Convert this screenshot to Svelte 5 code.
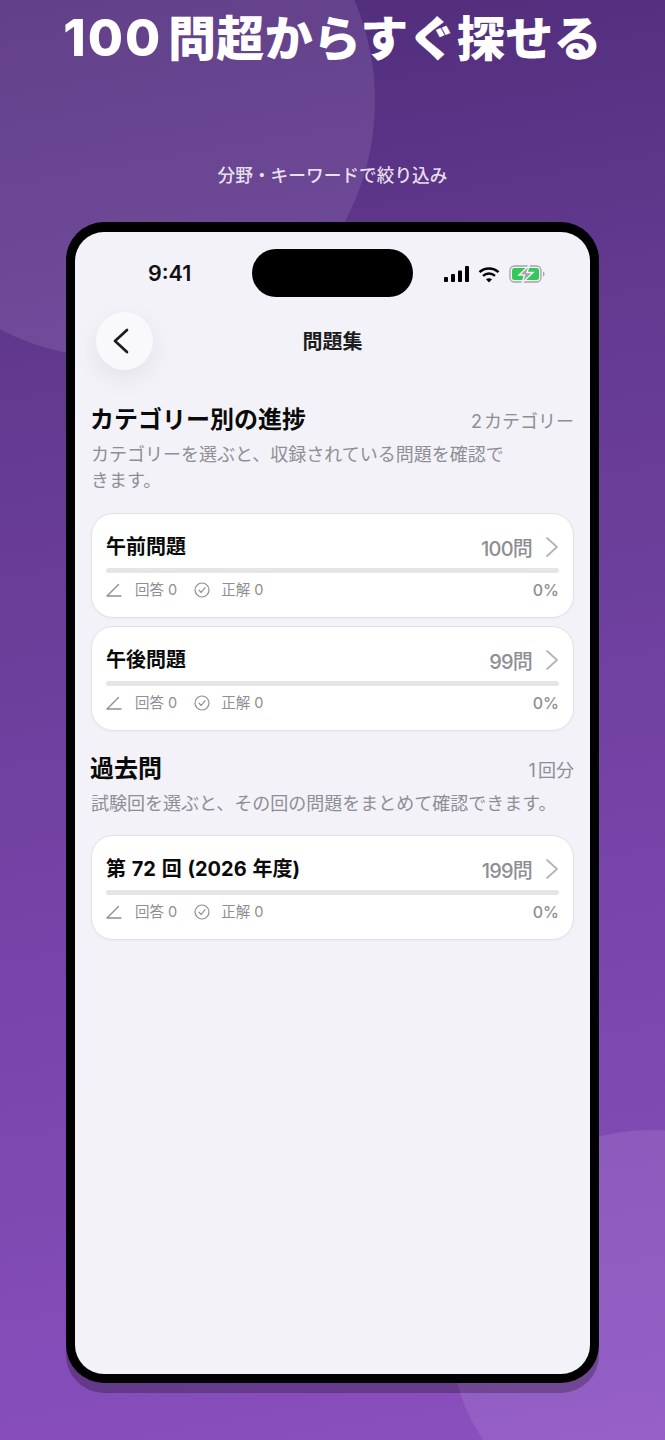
<script>
  const sections = [
    { title: 'カテゴリー別の進捗', count: '2 カテゴリー', desc: 'カテゴリーを選ぶと、収録されている問題を確認で\nきます。', cls: 'two',
      rows: [{ name: '午前問題', n: '100問' }, { name: '午後問題', n: '99問' }] },
    { title: '過去問', count: '1 回分', desc: '試験回を選ぶと、その回の問題をまとめて確認できます。', cls: 'one',
      rows: [{ name: '第 72 回 (2026 年度)', n: '199問' }] }
  ];
</script>

<div class="page">
  <div class="blob tl"></div>
  <div class="blob br"></div>
  <h1><span class="digits">100</span> 問超からすぐ探せる</h1>
  <p class="sub">分野・キーワードで絞り込み</p>
  <div class="phone">
    <div class="screen">
      <div class="status">
        <span class="time">9:41</span>
        <div class="island"></div>
        <div class="icons">
          <svg width="25" height="17" viewBox="0 0 25 17"><rect x="0" y="11" width="4" height="5" rx="1"/><rect x="7" y="8" width="4" height="8" rx="1"/><rect x="14" y="4.5" width="4" height="11.5" rx="1"/><rect x="21" y="0" width="4" height="16" rx="1"/></svg>
          <svg width="22" height="17" viewBox="0 0 22 17" fill="none" stroke="#000" stroke-width="2.4"><path d="M1.5 6.2C6.7 1.2 15.3 1.2 20.5 6.2"/><path d="M5 9.8c3.400-3.100 8.600-3.100 12 0"/><path d="M11 16.500l-3-3.300c1.800-1.300 4.200-1.300 6 0z" fill="#000" stroke="none"/></svg>
          <svg width="36" height="18" viewBox="0 0 36 18"><rect x="1" y="1" width="31" height="16" rx="4.5" fill="none" stroke="#a5a5a8" stroke-width="1.3"/><rect x="3" y="3" width="27" height="12" rx="2.5" fill="#35c759"/><path d="M34 6.500c1.200.4 1.500 1.400 1.500 2.500s-.3 2.100-1.500 2.500z" fill="#a5a5a8"/><path d="M20.500 0 10 10h5.500L13 18l11-10.500h-6z" fill="#a5a5a8" stroke="#f2f2f8" stroke-width="1.4"/></svg>
        </div>
      </div>
      <div class="nav">
        <button class="back" aria-label="戻る">
          <svg width="16" height="28" viewBox="0 0 16 28" fill="none" stroke="#1c1c1e" stroke-width="2.7" stroke-linecap="round" stroke-linejoin="round"><path d="M14 3 2 14l12 11"/></svg>
        </button>
        <span class="navtitle">問題集</span>
      </div>
      {#each sections as s}
        <section class={s.cls}>
          <div class="head">
            <h2>{s.title}</h2>
            <span class="count">{s.count}</span>
          </div>
          <p class="desc">{s.desc}</p>
          <div class="cards">
            {#each s.rows as r}
              <div class="card">
                <div class="top">
                  <span class="name">{r.name}</span>
                  <span class="num">{r.n}</span>
                  <svg width="14" height="22" viewBox="0 0 14 22" fill="none" stroke="#b4b4b8" stroke-width="1.8" stroke-linecap="round" stroke-linejoin="round"><path d="M2 2l10 9-10 9"/></svg>
                </div>
                <div class="bar"></div>
                <div class="stats">
                  <svg width="16" height="14" viewBox="0 0 16 14" fill="none" stroke="#8e8e93" stroke-width="1.4" stroke-linecap="round"><path d="M1 13 12.500 1.500M1 13h14"/></svg>
                  <span class="lbl one-l">回答 0</span>
                  <svg class="chk" width="16" height="16" viewBox="0 0 16 16" fill="none" stroke="#8e8e93" stroke-width="1.2" stroke-linecap="round" stroke-linejoin="round"><circle cx="8" cy="8" r="7"/><path d="M5 8.200l2.200 2.300L11 5.700"/></svg>
                  <span class="lbl">正解 0</span>
                  <span class="pct">0%</span>
                </div>
              </div>
            {/each}
          </div>
        </section>
      {/each}
    </div>
  </div>
</div>

<style>
  :global(body) { margin: 0; }
  .page {
    position: relative; width: 665px; height: 1440px; overflow: hidden; box-sizing: border-box;
    padding-top: 8px;
    background: linear-gradient(170deg, #4f2c79 0%, #62398f 25%, #7845aa 65%, #8a50bf 100%);
    font-family: Inter, "Noto Sans CJK JP", sans-serif; color: #000;
  }
  .blob { position: absolute; border-radius: 50%; background: rgba(235,210,255,.12); }
  .tl { left: -139px; top: -156px; width: 514px; height: 514px; }
  .br { left: 450px; top: 1130px; width: 400px; height: 400px; }
  h1 {
    position: relative; margin: 0; text-align: center; color: #fff;
    font-size: 48px; line-height: 60px; font-weight: 800; word-spacing: -5px; letter-spacing: .3px;
  }
  .digits { font-size: 51px; letter-spacing: 2px; }
  .sub {
    position: relative; margin: 95px 0 0; text-align: center; color: rgba(255,255,255,.85);
    font-size: 17.7px; line-height: 24px; font-weight: 500;
  }
  .phone {
    position: relative; margin: 34px 0 0 66px; width: 533px; height: 1161px; box-sizing: border-box;
    background: #000; border-radius: 38px; padding: 9.5px 9px 9.5px;
    box-shadow: 0 10px 0 rgba(0,0,0,.25);
  }
  .screen { height: 100%; background: #f2f2f8; border-radius: 29px; box-sizing: border-box; padding: 0 16px; }
  .status { position: relative; height: 65px; }
  .time { position: absolute; left: 57px; top: 27.5px; font-size: 21.5px; line-height: 28px; font-weight: 600; color: #111; }
  .island { position: absolute; left: 161px; top: 17.5px; width: 161px; height: 48px; border-radius: 24px; background: #000; }
  .icons { position: absolute; left: 353px; top: 33.5px; display: flex; gap: 9px; align-items: center; }
  .nav { position: relative; height: 58px; margin-top: 15.5px; display: flex; align-items: center; justify-content: center; }
  .back {
    position: absolute; left: 4.5px; top: 0; width: 57px; height: 58px; border-radius: 50%; border: 0; padding: 0;
    background: #f9f9fc; box-shadow: 0 8px 24px rgba(0,0,0,.07); display: flex; align-items: center; justify-content: center;
  }
  .back svg { margin-right: 6px; }
  .navtitle { font-size: 20px; font-weight: 700; line-height: 30px; color: #1c1c1e; padding-top: 2px; }
  section.two { margin-top: 32px; }
  section.one { margin-top: 20px; }
  .head { display: flex; justify-content: space-between; align-items: center; height: 36px; }
  h2 { margin: 0 0 0 -1px; font-size: 24px; line-height: 36px; font-weight: 700; color: #0a0a0a; }
  .count { font-size: 18px; color: #8e8e93; line-height: 26px; word-spacing: -3px; padding-top: 3px; }
  .desc { margin: 4px 0 0; font-size: 18px; line-height: 26px; color: #8e8e93; white-space: pre-line; }
  .two .desc { width: 430px; }
  .cards { display: flex; flex-direction: column; gap: 8px; margin-top: 19px; }
  .one .cards { margin-top: 18px; }
  .card {
    box-sizing: border-box; height: 105px; background: #fff; border: 1px solid #e2e2e6; border-radius: 22px; padding: 15px 14px 0;
    box-shadow: 0 1px 3px rgba(0,0,0,.03);
  }
  .top { display: flex; align-items: center; height: 36px; }
  .name { flex: 1; font-size: 20px; line-height: 36px; font-weight: 700; color: #0a0a0a; word-spacing: 1px; }
  .num { font-size: 20px; font-weight: 500; color: #8e8e93; margin-right: 13px; letter-spacing: -.8px; }
  .bar { height: 5px; background: #e5e5e8; border-radius: 3px; margin-top: 3px; }
  .stats { display: flex; align-items: center; height: 26px; margin-top: 4px; color: #8e8e93; font-size: 14.5px; }
  .lbl { line-height: 26px; }
  .one-l { margin-left: 13px; }
  .chk { margin-left: 17px; margin-right: 11px; }
  .pct { margin-left: auto; font-size: 16px; font-weight: 500; }
</style>
